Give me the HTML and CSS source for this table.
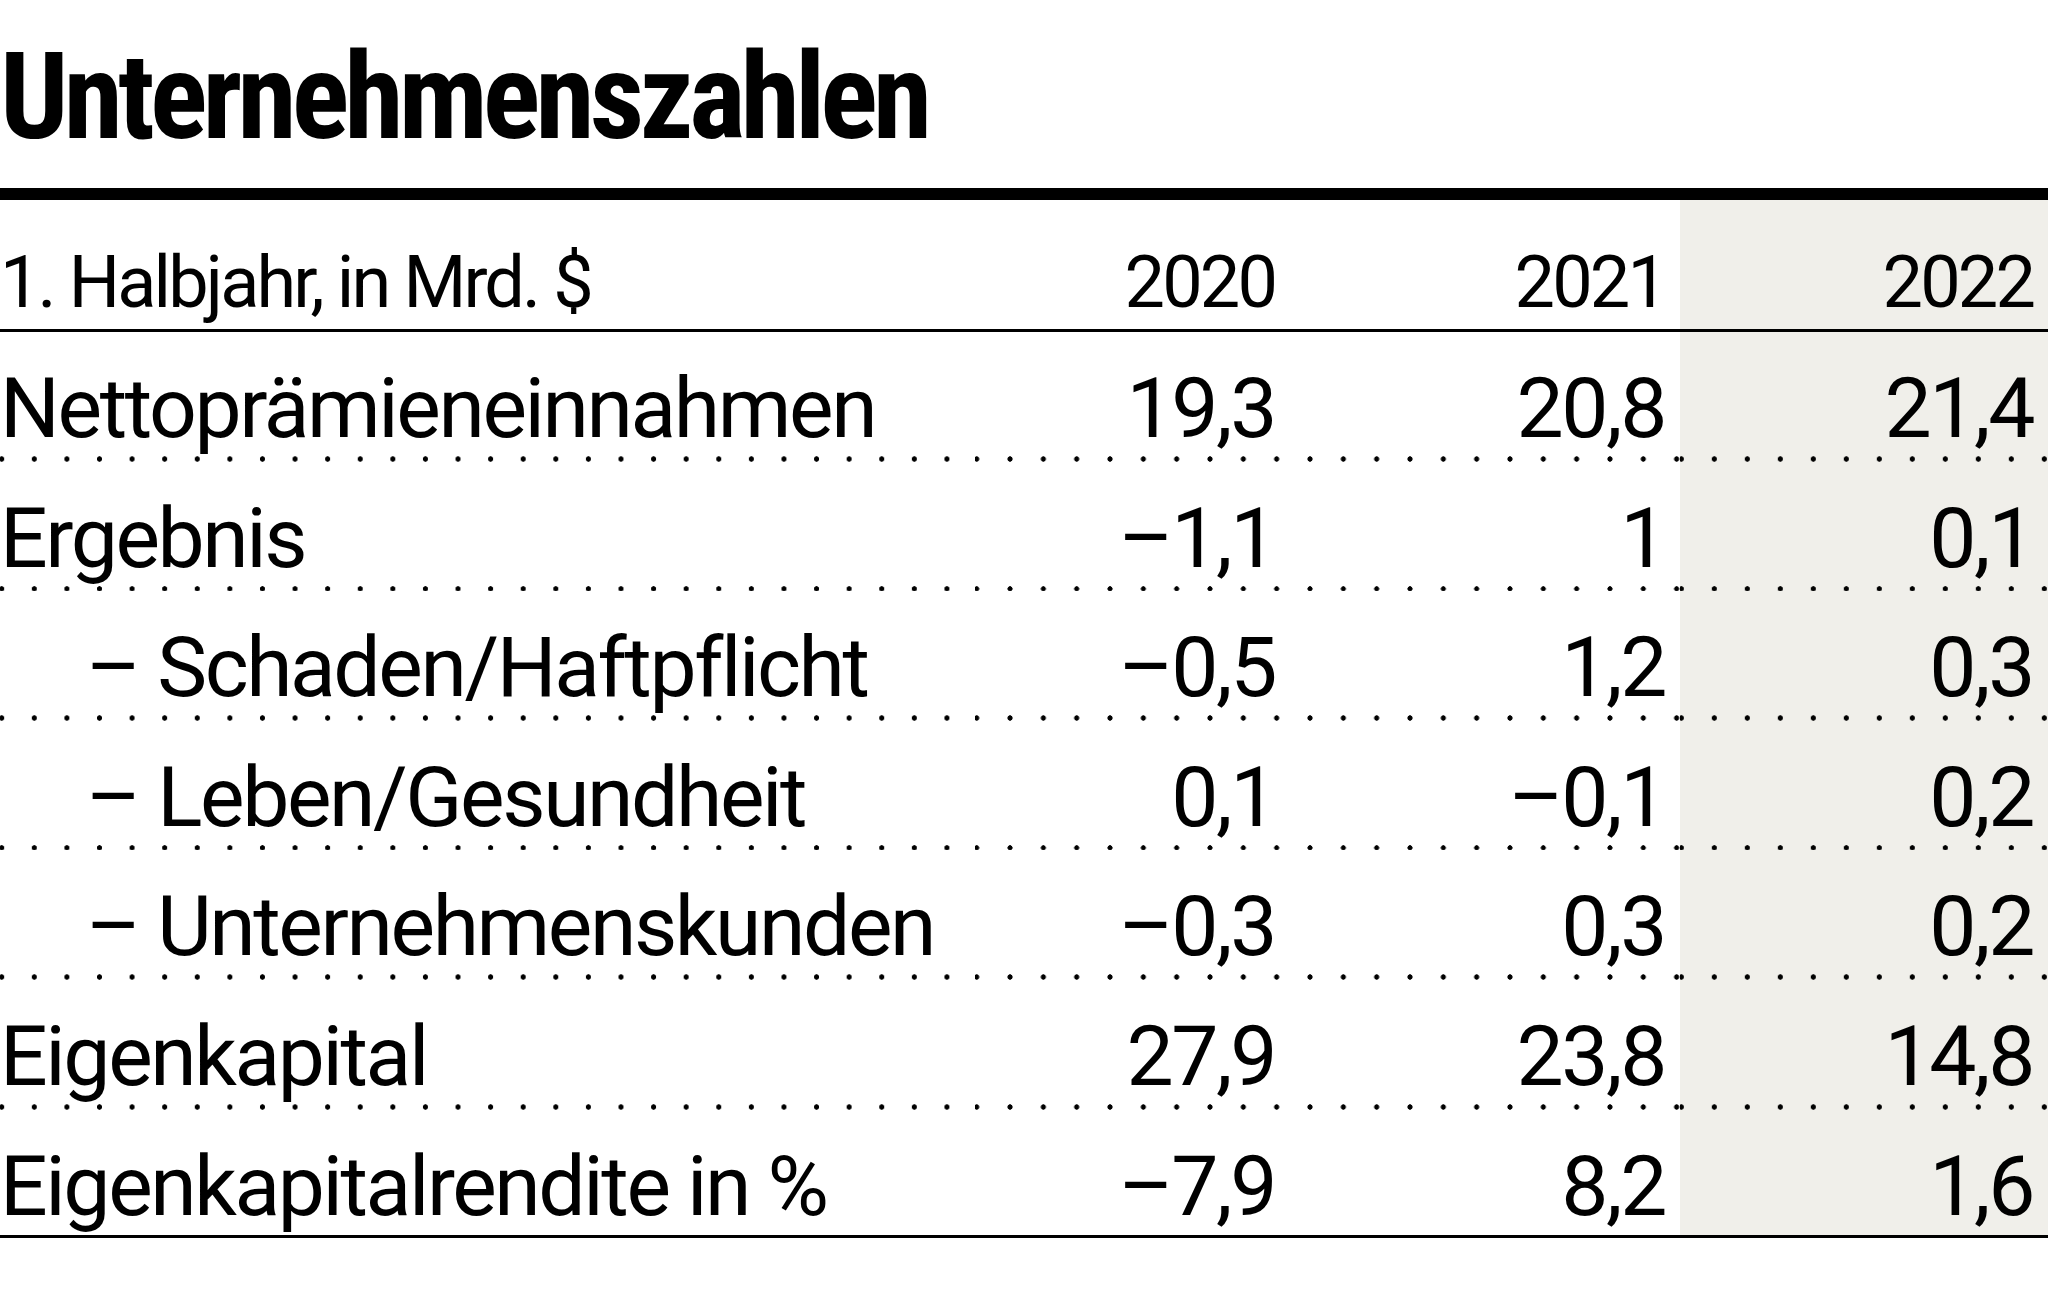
FILE: index.html
```html
<!DOCTYPE html>
<html lang="de">
<head>
<meta charset="utf-8">
<title>Unternehmenszahlen</title>
<link rel="stylesheet" href="styles.css">
</head>
<body>
<div class="chart">
  <h1 class="title">Unternehmenszahlen</h1>
  <div class="table">
    <div class="row head">
      <div class="cell label">1. Halbjahr, in Mrd. $</div>
      <div class="cell num c1">2020</div>
      <div class="cell num c2">2021</div>
      <div class="cell num c3">2022</div>
    </div>
    <div class="row data">
      <div class="cell label">Nettoprämieneinnahmen</div>
      <div class="cell num c1">19,3</div>
      <div class="cell num c2">20,8</div>
      <div class="cell num c3">21,4</div>
    </div>
    <div class="row data">
      <div class="cell label">Ergebnis</div>
      <div class="cell num c1">–1,1</div>
      <div class="cell num c2">1</div>
      <div class="cell num c3">0,1</div>
    </div>
    <div class="row data">
      <div class="cell label sub">– Schaden/Haftpflicht</div>
      <div class="cell num c1">–0,5</div>
      <div class="cell num c2">1,2</div>
      <div class="cell num c3">0,3</div>
    </div>
    <div class="row data">
      <div class="cell label sub">– Leben/Gesundheit</div>
      <div class="cell num c1">0,1</div>
      <div class="cell num c2">–0,1</div>
      <div class="cell num c3">0,2</div>
    </div>
    <div class="row data">
      <div class="cell label sub">– Unternehmenskunden</div>
      <div class="cell num c1">–0,3</div>
      <div class="cell num c2">0,3</div>
      <div class="cell num c3">0,2</div>
    </div>
    <div class="row data">
      <div class="cell label">Eigenkapital</div>
      <div class="cell num c1">27,9</div>
      <div class="cell num c2">23,8</div>
      <div class="cell num c3">14,8</div>
    </div>
    <div class="row data last">
      <div class="cell label">Eigenkapitalrendite in %</div>
      <div class="cell num c1">–7,9</div>
      <div class="cell num c2">8,2</div>
      <div class="cell num c3">1,6</div>
    </div>
  </div>
</div>
</body>
</html>
```

FILE: styles.css
```css
* {
  box-sizing: border-box;
}

body {
  margin: 0;
  background: #ffffff;
  color: #000000;
  font-family: Roboto, "Liberation Sans", sans-serif;
}

.chart {
  width: 2048px;
}

.title {
  margin: 0;
  height: 200px;
  padding: 37px 0 0 0;
  font-size: 120px;
  line-height: 120px;
  font-weight: 700;
  font-stretch: 75%;
  letter-spacing: -0.04em;
  white-space: nowrap;
  border-bottom: 12px solid #000000;
}

.table {
  border-bottom: 3px solid #000000;
}

.row {
  display: grid;
  grid-template-columns: 975px 319px 386px 368px;
}

.cell {
  white-space: nowrap;
}

.num {
  text-align: right;
  padding-right: 15px;
}

.num.c1 {
  padding-right: 19px;
}

.num.c3 {
  padding-right: 15px;
}

.c3 {
  background-color: #f0efea;
}

/* header row */
.head {
  border-bottom: 3px solid #000000;
}

.head .cell {
  height: 129px;
  padding-top: 47px;
  font-size: 72px;
  line-height: 72px;
  letter-spacing: -2.85px;
}

/* data rows */
.data .cell {
  height: 129.6px;
  padding-top: 35px;
  font-size: 84px;
  line-height: 84px;
  letter-spacing: -2.4px;
  background-repeat: repeat-x;
  background-image: radial-gradient(circle, #000000 0, #000000 2.3px, rgba(0, 0, 0, 0) 2.8px);
  background-size: 33.33px 5.6px;
}

.data .label {
  background-size: 32.6px 5.6px;
  background-position: -14.6px bottom;
}

.data .c1 {
  background-position: -14.97px bottom;
}

.data .c2 {
  background-position: -0.67px bottom;
}

.data .c3 {
  background-size: 33px 5.6px;
  background-position: -15.2px bottom;
}

.data .sub {
  padding-left: 86px;
}

.data.last .cell {
  height: 125px;
  background-image: none;
}
```
